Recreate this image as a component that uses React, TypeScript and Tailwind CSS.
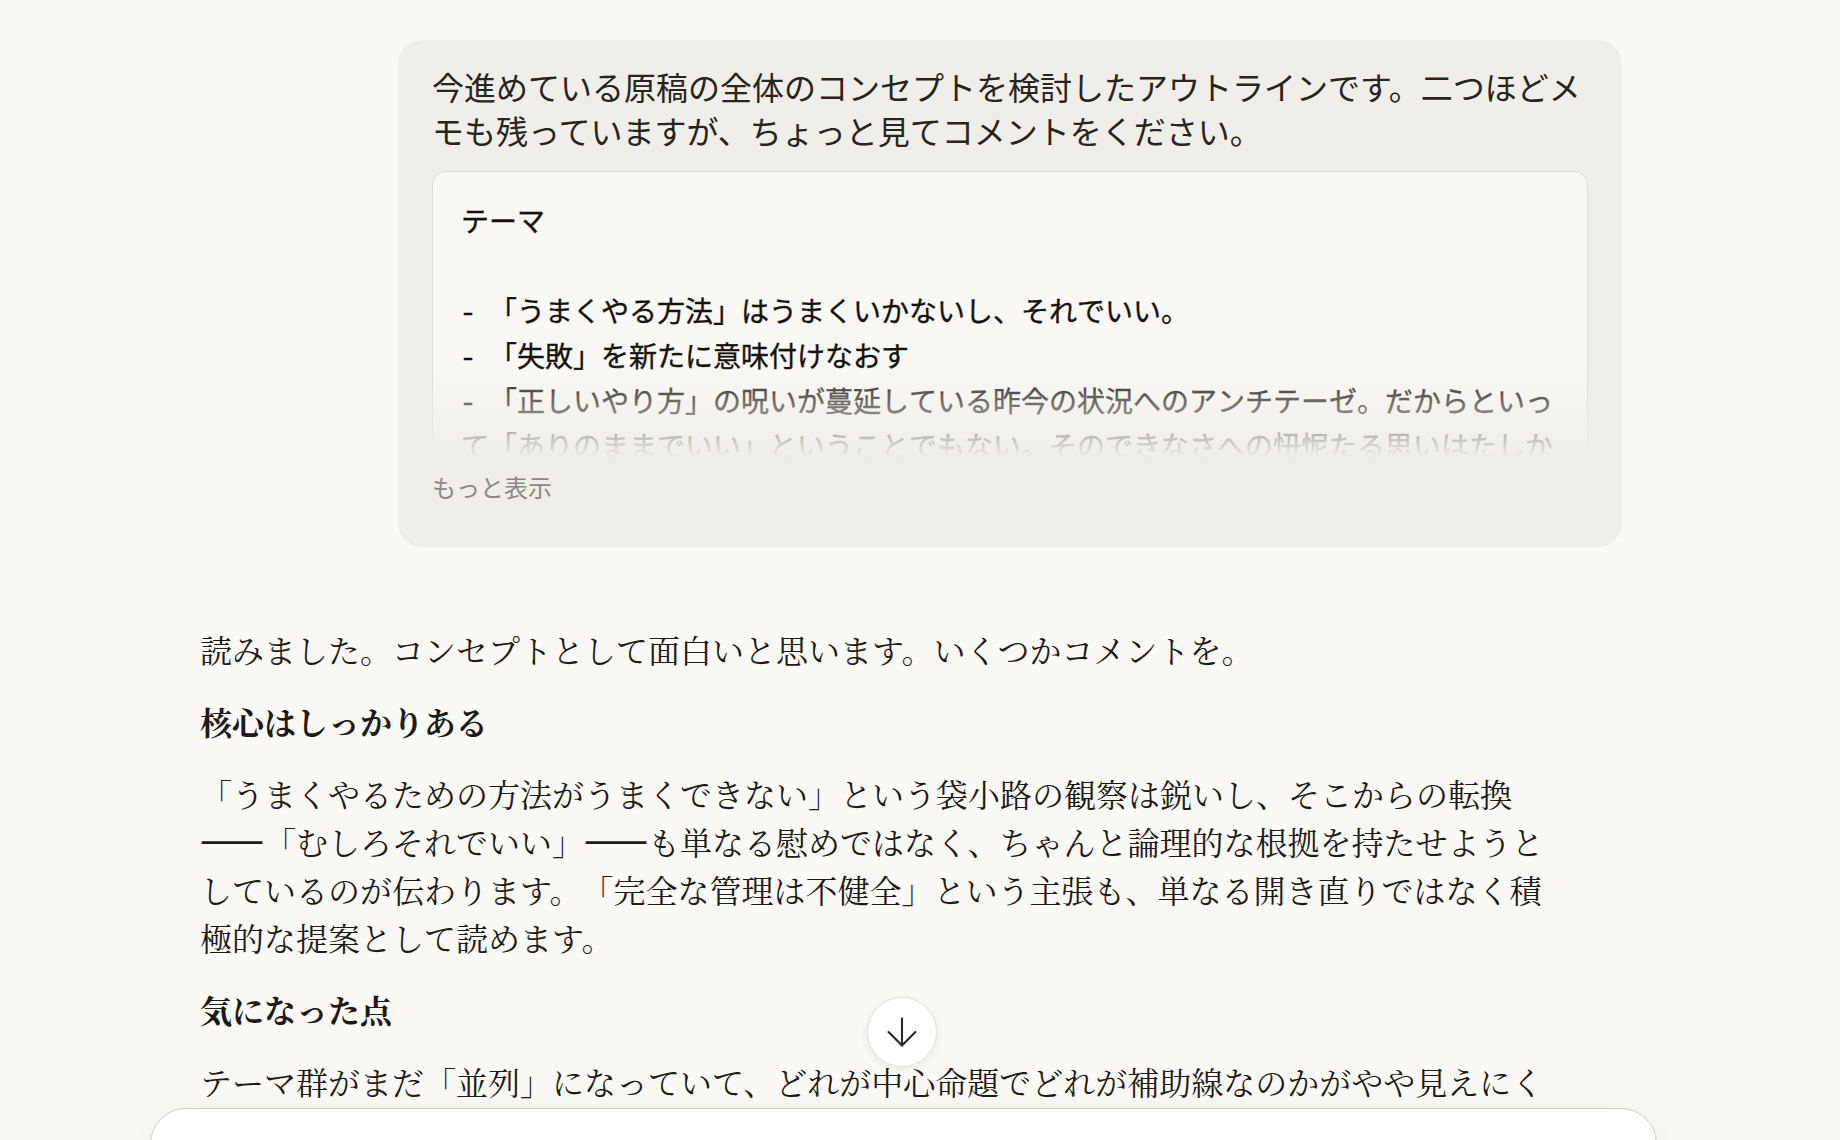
import { ArrowDown } from 'lucide-react';

const pastedText = `テーマ

- 「うまくやる方法」はうまくいかないし、それでいい。
- 「失敗」を新たに意味付けなおす
- 「正しいやり方」の呪いが蔓延している昨今の状況へのアンチテーゼ。だからといって「ありのままでいい」ということでもない。そのできなさへの忸怩たる思いはたしかにある。
- 「管理しきれなさ」を前提にした書き方を考える`;

function Dash() {
  return <span className="font-bold [font-feature-settings:'fwid'] [-webkit-text-stroke:1.4px_#1c1b18]">——</span>;
}

function UserMessage() {
  return (
    <div className="ml-auto w-[1224px] rounded-[24px] bg-[#f0eee8] px-[34px] pt-[24px] pb-[42px]">
      <p className="font-['Noto_Sans_CJK_JP','Noto_Sans',sans-serif] text-[32px] leading-[44px] text-[#26251f]">
        今進めている原稿の全体のコンセプトを検討したアウトラインです。二つほどメモも残っていますが、ちょっと見てコメントをください。
      </p>

      <div className="relative mt-[19px] h-[286px] overflow-hidden">
        <div className="rounded-[14px] border border-[#dedcd5] bg-[#f9f8f5] px-[28px] pt-[26px] pb-[40px]">
          <p className="whitespace-pre-wrap font-['Noto_Sans_Mono_CJK_JP','Noto_Sans_CJK_JP',monospace] text-[28px] leading-[45px] font-medium text-[#14130f] [-webkit-text-stroke:0.35px_#14130f]">
            {pastedText}
          </p>
        </div>
        <div className="absolute inset-x-0 bottom-0 h-[92px] bg-gradient-to-b from-[#f0eee8]/0 to-[#f0eee8]" />
      </div>

      <p className="mt-[12px] font-['Noto_Sans_CJK_JP',sans-serif] text-[24px] leading-[36px] text-[#8c8984]">
        もっと表示
      </p>
    </div>
  );
}

function AssistantMessage() {
  return (
    <div className="mt-[78px] ml-[18px] w-[1360px] space-y-[24px] font-['Noto_Serif_CJK_JP','IPAexMincho','IPAMincho','Noto_Sans_CJK_JP',serif] text-[32px] leading-[48px] text-[#1c1b18] [text-spacing-trim:space-all]">
      <p>読みました。コンセプトとして面白いと思います。いくつかコメントを。</p>
      <h3 className="font-bold">核心はしっかりある</h3>
      <p>
        「うまくやるための方法がうまくできない」という袋小路の観察は鋭いし、そこからの転換<Dash />「むしろそれでいい」<Dash />も単なる慰めではなく、ちゃんと論理的な根拠を持たせようとしているのが伝わります。「完全な管理は不健全」という主張も、単なる開き直りではなく積極的な提案として読めます。
      </p>
      <h3 className="font-bold">気になった点</h3>
      <p>
        テーマ群がまだ「並列」になっていて、どれが中心命題でどれが補助線なのかがやや見えにくいところがあります。
      </p>
    </div>
  );
}

export default function App() {
  return (
    <div className="relative h-[1140px] w-full overflow-hidden bg-[#faf9f5]">
      <div className="ml-[182px] w-[1440px] pt-[40px]">
        <UserMessage />
        <AssistantMessage />
      </div>

      <button className="absolute left-[867px] top-[997px] flex h-[70px] w-[70px] items-center justify-center rounded-full border border-[#e4e2dc] bg-white shadow-[0_2px_8px_rgba(0,0,0,0.08)]">
        <ArrowDown size={46} strokeWidth={1.1} className="text-[#2a2925]" />
      </button>

      <div className="absolute left-[150px] top-[1108px] h-[200px] w-[1507px] rounded-[36px] border border-[#cfcdc6] bg-white shadow-[0_4px_24px_rgba(0,0,0,0.06)]" />
    </div>
  );
}
